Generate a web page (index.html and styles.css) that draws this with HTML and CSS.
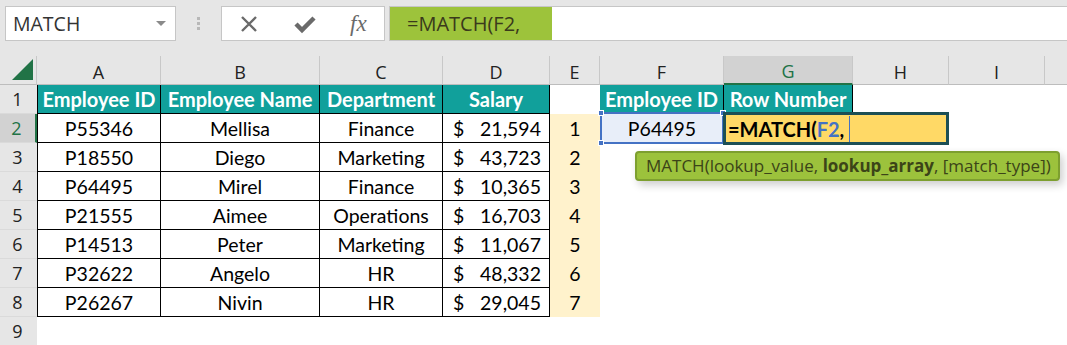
FILE: index.html
```html
<!DOCTYPE html>
<html lang="en">
<head>
    <meta charset="UTF-8">
    <title>MATCH - Worksheet</title>
    <link rel="stylesheet" href="styles.css">
</head>
<body>
    <div class="toolbar">
        <div class="name-box">
            <span>MATCH</span>
            <span class="caret"></span>
        </div>
        <div class="grip"><i></i><i></i><i></i></div>
        <div class="fx-box">
            <svg class="ico" width="22" height="22" viewBox="0 0 22 22"><path d="M4 4 L18 18 M18 4 L4 18" stroke="#6a6a6a" stroke-width="2.4" fill="none"/></svg>
            <svg class="ico" width="24" height="22" viewBox="0 0 24 22"><path d="M3 11 L9 17 L21 5" stroke="#6a6a6a" stroke-width="4.5" fill="none"/></svg>
            <span class="fx">fx</span>
        </div>
        <div class="formula">
            <span class="formula-hl">=MATCH(F2,</span>
        </div>
    </div>

    <div class="sheet">
        <div class="corner"><span class="tri"></span></div>
        <div class="ch">A</div>
        <div class="ch">B</div>
        <div class="ch">C</div>
        <div class="ch">D</div>
        <div class="ch">E</div>
        <div class="ch">F</div>
        <div class="ch sel">G</div>
        <div class="ch">H</div>
        <div class="ch">I</div>
        <div class="ch last"></div>

        <!-- row 1 -->
        <div class="rh">1</div>
        <div class="c hd first">Employee ID</div>
        <div class="c hd">Employee Name</div>
        <div class="c hd">Department</div>
        <div class="c hd">Salary</div>
        <div class="c"></div>
        <div class="c hd sep">Employee ID</div>
        <div class="c hd">Row Number</div>
        <div class="c"></div>
        <div class="c"></div>
        <div class="c"></div>

        <!-- row 2 -->
        <div class="rh sel">2</div>
        <div class="c t first">P55346</div>
        <div class="c t">Mellisa</div>
        <div class="c t">Finance</div>
        <div class="c t money"><span>$</span><span>21,594</span></div>
        <div class="c idx">1</div>
        <div class="c active">
            P64495
            <span class="knob tl"></span>
            <span class="knob tr"></span>
            <span class="knob bl"></span>
        </div>
        <div class="c edit-host">
            <div class="edit">=MATCH(<span class="ref">F2</span>,<span class="cursor"></span></div>
            <div class="tip">MATCH(lookup_value, <b>lookup_array</b>, [match_type])</div>
        </div>
        <div class="c"></div>
        <div class="c"></div>
        <div class="c"></div>

        <!-- row 3 -->
        <div class="rh">3</div>
        <div class="c t first">P18550</div>
        <div class="c t">Diego</div>
        <div class="c t">Marketing</div>
        <div class="c t money"><span>$</span><span>43,723</span></div>
        <div class="c idx">2</div>
        <div class="c"></div><div class="c"></div><div class="c"></div><div class="c"></div><div class="c"></div>

        <!-- row 4 -->
        <div class="rh">4</div>
        <div class="c t first">P64495</div>
        <div class="c t">Mirel</div>
        <div class="c t">Finance</div>
        <div class="c t money"><span>$</span><span>10,365</span></div>
        <div class="c idx">3</div>
        <div class="c"></div><div class="c"></div><div class="c"></div><div class="c"></div><div class="c"></div>

        <!-- row 5 -->
        <div class="rh">5</div>
        <div class="c t first">P21555</div>
        <div class="c t">Aimee</div>
        <div class="c t">Operations</div>
        <div class="c t money"><span>$</span><span>16,703</span></div>
        <div class="c idx">4</div>
        <div class="c"></div><div class="c"></div><div class="c"></div><div class="c"></div><div class="c"></div>

        <!-- row 6 -->
        <div class="rh">6</div>
        <div class="c t first">P14513</div>
        <div class="c t">Peter</div>
        <div class="c t">Marketing</div>
        <div class="c t money"><span>$</span><span>11,067</span></div>
        <div class="c idx">5</div>
        <div class="c"></div><div class="c"></div><div class="c"></div><div class="c"></div><div class="c"></div>

        <!-- row 7 -->
        <div class="rh">7</div>
        <div class="c t first">P32622</div>
        <div class="c t">Angelo</div>
        <div class="c t">HR</div>
        <div class="c t money"><span>$</span><span>48,332</span></div>
        <div class="c idx">6</div>
        <div class="c"></div><div class="c"></div><div class="c"></div><div class="c"></div><div class="c"></div>

        <!-- row 8 -->
        <div class="rh">8</div>
        <div class="c t first">P26267</div>
        <div class="c t">Nivin</div>
        <div class="c t">HR</div>
        <div class="c t money"><span>$</span><span>29,045</span></div>
        <div class="c idx">7</div>
        <div class="c"></div><div class="c"></div><div class="c"></div><div class="c"></div><div class="c"></div>

        <!-- row 9 -->
        <div class="rh">9</div>
        <div class="c"></div><div class="c"></div><div class="c"></div><div class="c"></div><div class="c"></div>
        <div class="c"></div><div class="c"></div><div class="c"></div><div class="c"></div><div class="c"></div>
    </div>
</body>
</html>
```

FILE: styles.css
```css
* {
    box-sizing: border-box;
}

body {
    margin: 0;
    width: 1067px;
    height: 345px;
    overflow: hidden;
    background: #e6e6e6;
    font-family: Lato, "Open Sans", sans-serif;
}

/* formula bar */
.toolbar {
    height: 56px;
    display: flex;
    align-items: flex-start;
    padding: 6px 0 0 5px;
    font-family: "Open Sans", sans-serif;
}

.name-box {
    width: 171px;
    height: 35px;
    background: #fff;
    border: 1px solid #c6c6c6;
    display: flex;
    align-items: center;
    justify-content: space-between;
    padding: 0 9px 0 7px;
    font-size: 19.5px;
    color: #333;
}

.caret {
    width: 0;
    height: 0;
    border-left: 5px solid transparent;
    border-right: 5px solid transparent;
    border-top: 5px solid #8a8a8a;
}

.grip {
    width: 45px;
    height: 35px;
    display: flex;
    flex-direction: column;
    align-items: center;
    justify-content: center;
    gap: 2px;
}

.grip i {
    width: 3px;
    height: 3px;
    background: #b8b8b8;
}

.fx-box {
    width: 164px;
    height: 35px;
    background: #fff;
    border: 1px solid #c6c6c6;
    display: flex;
    align-items: center;
    padding-left: 16px;
    gap: 33px;
}

.fx {
    font-family: "Liberation Serif", serif;
    font-style: italic;
    font-size: 23px;
    color: #6a6a6a;
    margin-left: 0;
}

.formula {
    flex: 1;
    height: 35px;
    margin-left: 4px;
    background: #fff;
    border: 1px solid #c6c6c6;
    border-right: none;
    display: flex;
}

.formula-hl {
    width: 162px;
    background: #9dc33b;
    color: #3a3a1c;
    font-size: 20px;
    line-height: 33px;
    padding-left: 17px;
}

/* grid */
.sheet {
    position: relative;
    display: grid;
    grid-template-columns: 37px 124px 159px 123px 107px 50px 124px 129px 96px 96px 22px;
    grid-template-rows: 29px repeat(9, 29px);
    background: #fff;
}

.corner {
    background: #e6e6e6;
    border-right: 1px solid #c8c8c8;
    border-bottom: 1px solid #bdbdbd;
    position: relative;
}

.tri {
    position: absolute;
    right: 3px;
    bottom: 4px;
    width: 0;
    height: 0;
    border-left: 21px solid transparent;
    border-bottom: 21px solid #217346;
}

.ch {
    background: #e6e6e6;
    border-right: 1px solid #c8c8c8;
    border-bottom: 1px solid #bdbdbd;
    font-family: "Open Sans", sans-serif;
    font-size: 18px;
    color: #222;
    display: flex;
    align-items: center;
    justify-content: center;
    padding-top: 3px;
}

.ch.sel {
    background: #d2d2d2;
    color: #217346;
    border-bottom: 2px solid #217346;
}

.ch.last {
    border-right: none;
}

.rh {
    background: #e6e6e6;
    border-bottom: 1px solid #dadada;
    font-family: "Open Sans", sans-serif;
    font-size: 18px;
    color: #222;
    display: flex;
    align-items: center;
    justify-content: center;
    padding-right: 2px;
}

.rh.sel {
    background: #d2d2d2;
    color: #217346;
    border-right: 2px solid #217346;
}

.c {
    font-size: 19.5px;
    color: #000;
    display: flex;
    align-items: center;
    justify-content: center;
    white-space: nowrap;
}

.c.hd {
    background: #11a09b;
    color: #fff;
    font-weight: bold;
    font-size: 20px;
    border-right: 1px solid #000;
    border-bottom: 1px solid #000;
}

.c.t {
    border-right: 1px solid #000;
    border-bottom: 1px solid #000;
}

.c.first {
    border-left: 1px solid #000;
}

.c.hd.sep {
    border-left: none;
}

.c.money {
    justify-content: space-between;
    padding: 0 8px 0 10px;
}

.c.idx {
    background: #fff2cc;
}

.c.active {
    position: relative;
    background: #e8eef9;
    border: 2px solid #4472c4;
    margin: -2px 0 -1px 0;
}

.knob {
    position: absolute;
    width: 6px;
    height: 6px;
    background: #4472c4;
    border: 1px solid #fff;
}

.knob.tl { left: -4px; top: -4px; }
.knob.tr { right: -4px; top: -4px; }
.knob.bl { left: -4px; bottom: -4px; }

.edit-host {
    position: relative;
}

.edit {
    position: absolute;
    left: -1px;
    top: -2px;
    width: 226px;
    height: 33px;
    background: #ffd966;
    border: 3px solid #1c4f55;
    font-weight: bold;
    font-size: 20px;
    padding-left: 2px;
    display: flex;
    align-items: center;
    z-index: 2;
}

.ref {
    color: #4472c4;
}

.cursor {
    display: inline-block;
    width: 1px;
    height: 26px;
    background: #4472c4;
    margin-left: 5px;
}

.tip {
    position: absolute;
    left: -89px;
    top: 37px;
    width: 425px;
    height: 30px;
    background: #9cc23c;
    border: 2px solid #7d9f2f;
    border-radius: 4px;
    box-shadow: 3px 4px 8px rgba(0, 0, 0, 0.2);
    font-family: "Open Sans", sans-serif;
    font-size: 17px;
    color: #3b4418;
    font-weight: normal;
    line-height: 26px;
    padding-left: 9px;
    z-index: 3;
}

.tip b {
    font-weight: bold;
}
```
